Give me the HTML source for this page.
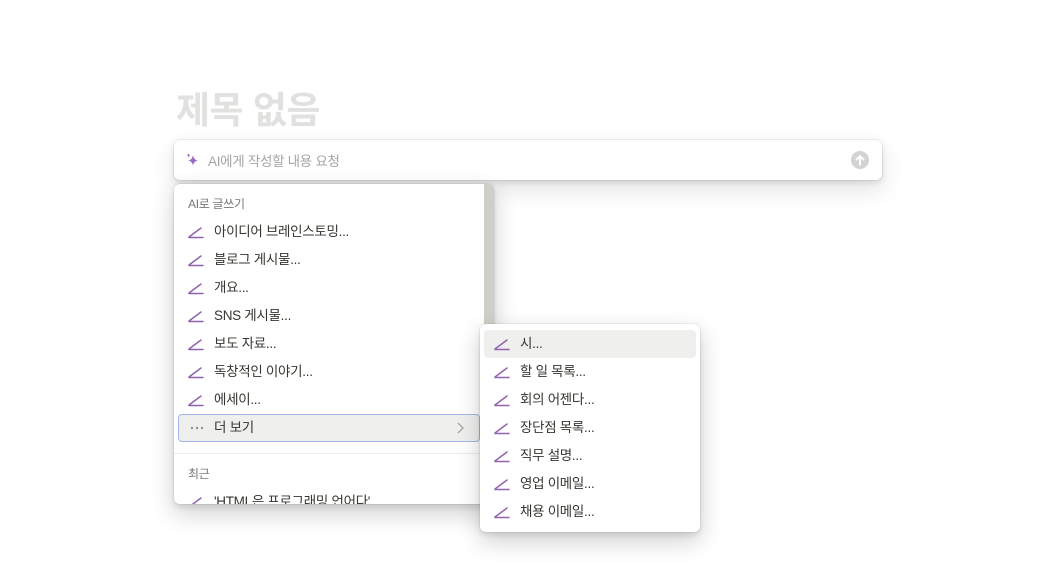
<!DOCTYPE html>
<html><head><meta charset="utf-8"><style>
body{margin:0;width:1045px;height:575px;background:#fff;font-family:"Liberation Sans","Noto Sans CJK KR",sans-serif;position:relative;overflow:hidden;color:#37352f}
.title{position:absolute;left:176px;top:80px;font-size:37px;font-weight:700;color:#e1e1df;letter-spacing:-0.5px}
.bar{position:absolute;left:174px;top:140px;width:708px;height:40px;background:#fff;border-radius:6px;box-shadow:0 0 0 1px rgba(15,15,15,.06),0 3px 6px rgba(15,15,15,.1),0 9px 24px rgba(15,15,15,.12)}
.bar .ph{position:absolute;left:34px;top:10px;font-size:13.5px;color:#a5a5a2;letter-spacing:-0.3px}
.bar .up{position:absolute;right:13px;top:11px;width:18px;height:18px;border-radius:50%;background:#d3d3d1}
.menu{position:absolute;left:174px;top:184px;width:320px;height:320px;background:#fff;border-radius:6px;overflow:hidden;box-shadow:0 0 0 1px rgba(15,15,15,.05),0 3px 6px rgba(15,15,15,.1),0 9px 24px rgba(15,15,15,.2)}
.scroll{position:absolute;left:310px;top:0;width:10px;height:320px;background:#cfcfc9}
.hdr{position:absolute;left:14px;font-size:12px;color:#787774;letter-spacing:-0.3px}
.item{position:absolute;left:4px;width:302px;height:28px;font-size:13.5px;line-height:28px;letter-spacing:-0.3px}
.item svg{position:absolute;left:10px;top:7px}
.item span{position:absolute;left:36px}
.sub{position:absolute;left:480px;top:324px;width:220px;height:208px;background:#fff;border-radius:6px;box-shadow:0 0 0 1px rgba(15,15,15,.05),0 3px 6px rgba(15,15,15,.1),0 9px 24px rgba(15,15,15,.2)}
.sub .item{width:212px}
</style></head><body>
<div class="title">제목 없음</div>
<div class="bar">
<svg style="position:absolute;left:11px;top:12px" width="16" height="16" viewBox="0 0 16 16"><path d="M8 3 Q8.6 8 13 8.5 Q8.6 9 8 14 Q7.4 9 3 8.5 Q7.4 8 8 3Z" fill="#9a6dc0"/><path d="M3.5 1 Q3.8 3 5.5 3.3 Q3.8 3.6 3.5 5.5 Q3.2 3.6 1.5 3.3 Q3.2 3 3.5 1Z" fill="#9a6dc0"/></svg>
<div class="ph">AI에게 작성할 내용 요청</div>
<div class="up"><svg width="18" height="18" viewBox="0 0 18 18"><path d="M9 13.5V5M5.5 8.5L9 5l3.5 3.5" stroke="#fff" stroke-width="2" fill="none" stroke-linecap="round" stroke-linejoin="round"/></svg></div>
</div>
<div class="menu">
<div class="scroll"></div>
<div class="hdr" style="top:11px">AI로 글쓰기</div>
<div class="item" style="top:34px"><svg width="16" height="14"><path d="M1 12L13 3M1 12.5H15" stroke="#9065b0" stroke-width="1.5" fill="none" stroke-linecap="round"/></svg><span>아이디어 브레인스토밍...</span></div>
<div class="item" style="top:62px"><svg width="16" height="14"><path d="M1 12L13 3M1 12.5H15" stroke="#9065b0" stroke-width="1.5" fill="none" stroke-linecap="round"/></svg><span>블로그 게시물...</span></div>
<div class="item" style="top:90px"><svg width="16" height="14"><path d="M1 12L13 3M1 12.5H15" stroke="#9065b0" stroke-width="1.5" fill="none" stroke-linecap="round"/></svg><span>개요...</span></div>
<div class="item" style="top:118px"><svg width="16" height="14"><path d="M1 12L13 3M1 12.5H15" stroke="#9065b0" stroke-width="1.5" fill="none" stroke-linecap="round"/></svg><span>SNS 게시물...</span></div>
<div class="item" style="top:146px"><svg width="16" height="14"><path d="M1 12L13 3M1 12.5H15" stroke="#9065b0" stroke-width="1.5" fill="none" stroke-linecap="round"/></svg><span>보도 자료...</span></div>
<div class="item" style="top:174px"><svg width="16" height="14"><path d="M1 12L13 3M1 12.5H15" stroke="#9065b0" stroke-width="1.5" fill="none" stroke-linecap="round"/></svg><span>독창적인 이야기...</span></div>
<div class="item" style="top:202px"><svg width="16" height="14"><path d="M1 12L13 3M1 12.5H15" stroke="#9065b0" stroke-width="1.5" fill="none" stroke-linecap="round"/></svg><span>에세이...</span></div>
<div class="item" style="top:230px;background:#efefee;border:1px solid #9fb8e6;border-radius:4px;height:26px;line-height:26px;width:300px"><svg width="16" height="14" style="top:6px"><circle cx="3" cy="7" r="1.2" fill="#91918e"/><circle cx="8" cy="7" r="1.2" fill="#91918e"/><circle cx="13" cy="7" r="1.2" fill="#91918e"/></svg><span style="left:35px">더 보기</span><svg width="10" height="12" style="left:276px;top:7px"><path d="M3 1l5 5-5 5" stroke="#a5a5a2" stroke-width="1.3" fill="none"/></svg></div>
<div style="position:absolute;left:0;top:269px;width:310px;height:1px;background:#ededec"></div>
<div class="hdr" style="top:281px">최근</div>
<div class="item" style="top:304px"><svg width="16" height="14"><path d="M1 12L13 3M1 12.5H15" stroke="#9065b0" stroke-width="1.5" fill="none" stroke-linecap="round"/></svg><span>'HTML은 프로그래밍 언어다'</span></div>
</div>
<div class="sub">
<div class="item" style="top:6px;background:#efefee;border-radius:4px"><svg width="16" height="14"><path d="M1 12L13 3M1 12.5H15" stroke="#9065b0" stroke-width="1.5" fill="none" stroke-linecap="round"/></svg><span>시...</span></div>
<div class="item" style="top:34px"><svg width="16" height="14"><path d="M1 12L13 3M1 12.5H15" stroke="#9065b0" stroke-width="1.5" fill="none" stroke-linecap="round"/></svg><span>할 일 목록...</span></div>
<div class="item" style="top:62px"><svg width="16" height="14"><path d="M1 12L13 3M1 12.5H15" stroke="#9065b0" stroke-width="1.5" fill="none" stroke-linecap="round"/></svg><span>회의 어젠다...</span></div>
<div class="item" style="top:90px"><svg width="16" height="14"><path d="M1 12L13 3M1 12.5H15" stroke="#9065b0" stroke-width="1.5" fill="none" stroke-linecap="round"/></svg><span>장단점 목록...</span></div>
<div class="item" style="top:118px"><svg width="16" height="14"><path d="M1 12L13 3M1 12.5H15" stroke="#9065b0" stroke-width="1.5" fill="none" stroke-linecap="round"/></svg><span>직무 설명...</span></div>
<div class="item" style="top:146px"><svg width="16" height="14"><path d="M1 12L13 3M1 12.5H15" stroke="#9065b0" stroke-width="1.5" fill="none" stroke-linecap="round"/></svg><span>영업 이메일...</span></div>
<div class="item" style="top:174px"><svg width="16" height="14"><path d="M1 12L13 3M1 12.5H15" stroke="#9065b0" stroke-width="1.5" fill="none" stroke-linecap="round"/></svg><span>채용 이메일...</span></div>
</div>
</body></html>
